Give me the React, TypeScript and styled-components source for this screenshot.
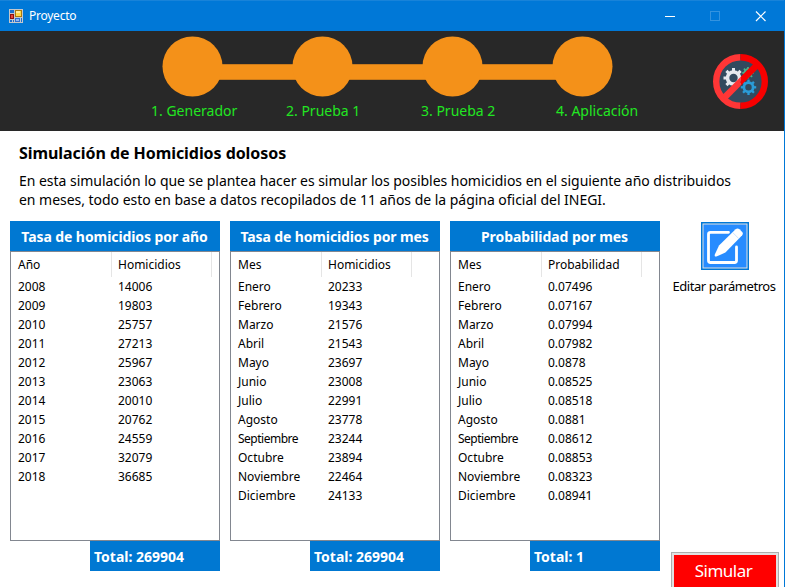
import React from "react";
import styled, { createGlobalStyle } from "styled-components";

const BLUE = "#0078d7";
const PANEL_BLUE = "#0078d2";

const GlobalStyle = createGlobalStyle`
  * { box-sizing: border-box; }
  html, body { margin: 0; padding: 0; overflow: hidden; background: #fff; }
  body { font-family: "Noto Sans", "Open Sans", sans-serif; color: #000; }
`;

const Window = styled.div`
  width: 785px;
  height: 587px;
  overflow: hidden;
  display: flex;
  flex-direction: column;
  border-right: 1px solid ${BLUE};
  background: #fff;
`;

const TitleBar = styled.header`
  flex: none;
  height: 31px;
  margin-right: -1px;
  display: flex;
  align-items: center;
  padding-left: 9px;
  background: ${BLUE};
  border-top: 1px solid #1883d9;
  color: #fff;
`;

const AppIcon = styled.svg`
  width: 14px;
  height: 14px;
  margin: -1px 6px 0 0;
`;

const WindowTitle = styled.span`
  flex: 1;
  font-size: 12px;
  line-height: 18px;
  letter-spacing: -0.25px;
`;

const CaptionButton = styled.button<{ $dim?: boolean }>`
  width: 45px;
  height: 30px;
  padding: 0;
  border: 0;
  display: flex;
  align-items: center;
  justify-content: center;
  background: transparent;
  color: ${(p) => (p.$dim ? "#3393df" : "#fff")};
`;

const CaptionButtons = styled.div`
  display: flex;
  margin-right: 2px;
`;

const Banner = styled.div`
  flex: none;
  height: 100px;
  display: flex;
  justify-content: space-between;
  background: #282828;
  padding: 5px 16px 0 151px;
`;

const Stepper = styled.nav`
  display: flex;
  flex-direction: column;
`;

const Track = styled.svg`
  width: 452px;
  height: 62px;
  margin-left: 11px;
`;

const StepLabels = styled.div`
  display: grid;
  grid-template-columns: repeat(4, 135px);
  margin-top: 3px;
`;

const StepLabel = styled.span`
  font-size: 14px;
  line-height: 19px;
  color: #22e622;
  white-space: nowrap;
`;

const StopIcon = styled.svg`
  width: 55px;
  height: 55px;
  margin-top: 18px;
`;

const Intro = styled.section`
  flex: none;
  height: 90px;
  padding: 11px 0 0 19px;
`;

const Heading = styled.h1`
  margin: 0 0 7px;
  font-size: 16px;
  line-height: 22px;
  font-weight: 700;
  letter-spacing: -0.06px;
`;

const Description = styled.p`
  margin: 0;
  font-size: 14px;
  line-height: 19px;
  letter-spacing: -0.03px;
  white-space: nowrap;
`;

const Content = styled.main`
  flex: 1;
  min-height: 0;
  display: flex;
  gap: 10px;
  padding-left: 10px;
`;

const Panel = styled.section`
  width: 210px;
  display: flex;
  flex-direction: column;
`;

const PanelTitle = styled.h2<{ $spacing: number }>`
  margin: 0;
  height: 30px;
  padding: 1px 1px 0 0;
  background: ${PANEL_BLUE};
  color: #fff;
  font-size: 14px;
  line-height: 30px;
  font-weight: 700;
  letter-spacing: ${(p) => p.$spacing}px;
  text-align: center;
  white-space: nowrap;
`;

const List = styled.div`
  height: 290px;
  padding-left: 1px;
  border: 1px solid #828790;
  background: #fff;
`;

const Row = styled.div<{ $widths: number[] }>`
  display: grid;
  grid-template-columns: ${(p) => p.$widths.map((w) => w + "px").join(" ")};
  font-size: 12px;
  line-height: 19px;
`;

const HeaderRow = styled(Row)`
  height: 25px;
  line-height: 26px;
`;

const Cell = styled.span<{ $tight?: boolean }>`
  padding-left: 6px;
  letter-spacing: ${(p) => (p.$tight ? "-0.5px" : "normal")};
`;

const HeaderCell = styled(Cell)`
  height: 25px;
  border-right: 1px solid #e5e5e5;
`;

const Total = styled.div`
  align-self: flex-end;
  width: 130px;
  height: 30px;
  padding: 1px 0 0 4px;
  background: ${PANEL_BLUE};
  color: #fff;
  font-size: 14px;
  font-weight: 700;
  line-height: 30px;
`;

const Sidebar = styled.aside`
  flex: 1;
  display: flex;
  flex-direction: column;
  align-items: center;
  padding: 1px 5px 0 0;
`;

const EditButton = styled.button`
  width: 48px;
  height: 48px;
  padding: 0;
  border: 0;
  background: transparent;
  display: block;
`;

const EditLabel = styled.span`
  margin: 7px -8px 0 -9px;
  font-size: 13px;
  line-height: 18px;
  letter-spacing: -0.42px;
  white-space: nowrap;
`;

const SimulateButton = styled.button`
  width: 108px;
  height: 41px;
  flex: none;
  margin-top: 257px;
  padding: 0 2px 4px 0;
  border: 1px solid #adadad;
  box-shadow: inset 0 0 0 2px #e1e1e1;
  background: #f00;
  color: #fff;
  font-family: inherit;
  font-size: 17px;
  letter-spacing: -0.5px;
`;

type TableData = {
  title: string;
  spacing: number;
  columns: [string, string];
  widths: number[];
  rows: [string, string][];
  total: string;
};

const months = [
  "Enero", "Febrero", "Marzo", "Abril", "Mayo", "Junio",
  "Julio", "Agosto", "Septiembre", "Octubre", "Noviembre", "Diciembre",
];
const yearly = ["14006", "19803", "25757", "27213", "25967", "23063", "20010", "20762", "24559", "32079", "36685"];
const monthly = ["20233", "19343", "21576", "21543", "23697", "23008", "22991", "23778", "23244", "23894", "22464", "24133"];
const odds = ["0.07496", "0.07167", "0.07994", "0.07982", "0.0878", "0.08525", "0.08518", "0.0881", "0.08612", "0.08853", "0.08323", "0.08941"];

const tables: TableData[] = [
  {
    title: "Tasa de homicidios por año",
    spacing: -0.08,
    columns: ["Año", "Homicidios"],
    widths: [100, 100],
    rows: yearly.map((v, i) => [String(2008 + i), v]),
    total: "269904",
  },
  {
    title: "Tasa de homicidios por mes",
    spacing: -0.12,
    columns: ["Mes", "Homicidios"],
    widths: [90, 90],
    rows: monthly.map((v, i) => [months[i], v]),
    total: "269904",
  },
  {
    title: "Probabilidad por mes",
    spacing: -0.06,
    columns: ["Mes", "Probabilidad"],
    widths: [90, 100],
    rows: odds.map((v, i) => [months[i], v]),
    total: "1",
  },
];

function DataPanel({ data }: { data: TableData }) {
  return (
    <Panel>
      <PanelTitle $spacing={data.spacing}>{data.title}</PanelTitle>
      <List>
        <HeaderRow $widths={data.widths}>
          {data.columns.map((c) => (
            <HeaderCell key={c}>{c}</HeaderCell>
          ))}
        </HeaderRow>
        {data.rows.map(([name, value]) => (
          <Row key={name} $widths={data.widths}>
            <Cell $tight={name.length > 9}>{name}</Cell>
            <Cell>{value}</Cell>
          </Row>
        ))}
      </List>
      <Total>Total: {data.total}</Total>
    </Panel>
  );
}

function FormIcon() {
  return (
    <AppIcon viewBox="0 0 14 14" shapeRendering="crispEdges">
      <rect width="14" height="14" fill="#c3c7cc" />
      <rect x="1" y="1" width="4" height="3" fill="#1a6fd0" />
      <rect x="6" y="1" width="7" height="7" fill="#a87a10" />
      <rect x="7" y="2" width="5" height="5" fill="#ffd84a" />
      <rect x="7" y="2" width="4" height="2" fill="#ffeb9c" />
      <rect x="1" y="5" width="4" height="5" fill="#8f1010" />
      <rect x="2" y="6" width="2" height="3" fill="#e2463a" />
      <rect x="1" y="11" width="2" height="2" fill="#1a6fd0" />
      <rect x="4" y="11" width="1" height="2" fill="#1a6fd0" />
      <rect x="6" y="9" width="5" height="4" fill="#2f6fd0" />
      <rect x="7" y="10" width="3" height="2" fill="#8db8f5" />
      <rect x="12" y="9" width="1" height="4" fill="#1a6fd0" />
    </AppIcon>
  );
}

const teeth = [0, 45, 90, 135, 180, 225, 270, 315];

function Gear({ x, y, r, color }: { x: number; y: number; r: number; color: string }) {
  return (
    <g transform={`translate(${x} ${y})`} fill={color}>
      <circle r={r * 0.6} fill="none" stroke={color} strokeWidth={r * 0.36} />
      {teeth.map((a) => (
        <rect key={a} x={-r * 0.15} y={-r} width={r * 0.3} height={r * 0.34} transform={`rotate(${a})`} />
      ))}
    </g>
  );
}

function NoGears() {
  return (
    <StopIcon viewBox="0 0 55 55">
      <circle cx="27.5" cy="27.5" r="22" fill="#324a5e" />
      <Gear x={35} y={18.8} r={5.8} color="#4cb08a" />
      <Gear x={20.5} y={24} r={10} color="#e6e9ee" />
      <Gear x={35.5} y={33.3} r={7.7} color="#2b9cd8" />
      <path d="M27.5 3.2A24.3 24.3 0 0 0 27.5 51.8" fill="none" stroke="#ff3636" strokeWidth="6.4" />
      <path d="M27.5 3.2A24.3 24.3 0 0 1 27.5 51.8" fill="none" stroke="#f70000" strokeWidth="6.4" />
      <path d="M8.6 41.8 27.5 22.9V32.1L13.2 46.4Z" fill="#ff3636" />
      <path d="M27.5 22.9 41.8 8.6 46.4 13.2 27.5 32.1Z" fill="#f70000" />
    </StopIcon>
  );
}

function EditIcon() {
  return (
    <svg width="48" height="48" viewBox="0 0 48 48" display="block">
      <rect width="48" height="48" fill={BLUE} />
      <rect x="2" y="2" width="44" height="44" fill="#278cff" stroke="#e1e1e1" />
      <path
        d="M27.5 10.3H9.5Q7.5 10.3 7.5 12.3V38.5Q7.5 40.5 9.5 40.5H33.5Q35.5 40.5 35.5 38.5V25"
        fill="none"
        stroke="#fff"
        strokeWidth="2.8"
        strokeLinecap="round"
      />
      <path
        d="M34.6 7.3Q36.5 5.6 38.5 7.3L41.2 10Q42.6 11.6 41.2 13.2L24.4 30.6 15.4 34.6Q13.2 34.8 13.8 32.6L18 23.6Z"
        fill="#fff"
      />
      <path d="M31.8 10.6 37.8 16.6" stroke="#b5d6ff" strokeWidth="0.7" />
    </svg>
  );
}

export default function App() {
  return (
    <>
      <GlobalStyle />
      <Window>
        <TitleBar>
          <FormIcon />
          <WindowTitle>Proyecto</WindowTitle>
          <CaptionButtons>
            <CaptionButton aria-label="Minimizar">
              <svg width="11" height="11" shapeRendering="crispEdges">
                <path d="M0 5.5H10" stroke="currentColor" />
              </svg>
            </CaptionButton>
            <CaptionButton $dim aria-label="Maximizar">
              <svg width="11" height="11">
                <rect x="0.5" y="0.5" width="9" height="9" fill="none" stroke="currentColor" />
              </svg>
            </CaptionButton>
            <CaptionButton aria-label="Cerrar">
              <svg width="11" height="11">
                <path d="M1 0.5 10.5 10M10.5 0.5 1 10" stroke="currentColor" strokeWidth="1.2" />
              </svg>
            </CaptionButton>
          </CaptionButtons>
        </TitleBar>
        <Banner>
          <Stepper>
            <Track viewBox="0 0 452 62">
              <rect x="30" y="28.2" width="390" height="15.6" fill="#f49119" />
              {[0, 130, 260, 390].map((x) => (
                <circle key={x} cx={30.5 + x} cy="30.5" r="30" fill="#f49119" />
              ))}
            </Track>
            <StepLabels>
              <StepLabel>1. Generador</StepLabel>
              <StepLabel>2. Prueba 1</StepLabel>
              <StepLabel>3. Prueba 2</StepLabel>
              <StepLabel>4. Aplicación</StepLabel>
            </StepLabels>
          </Stepper>
          <NoGears />
        </Banner>
        <Intro>
          <Heading>Simulación de Homicidios dolosos</Heading>
          <Description>
            En esta simulación lo que se plantea hacer es simular los posibles homicidios en el siguiente año distribuidos
            <br />
            en meses, todo esto en base a datos recopilados de 11 años de la página oficial del INEGI.
          </Description>
        </Intro>
        <Content>
          {tables.map((t) => (
            <DataPanel key={t.title} data={t} />
          ))}
          <Sidebar>
            <EditButton aria-label="Editar parámetros">
              <EditIcon />
            </EditButton>
            <EditLabel>Editar parámetros</EditLabel>
            <SimulateButton>Simular</SimulateButton>
          </Sidebar>
        </Content>
      </Window>
    </>
  );
}
